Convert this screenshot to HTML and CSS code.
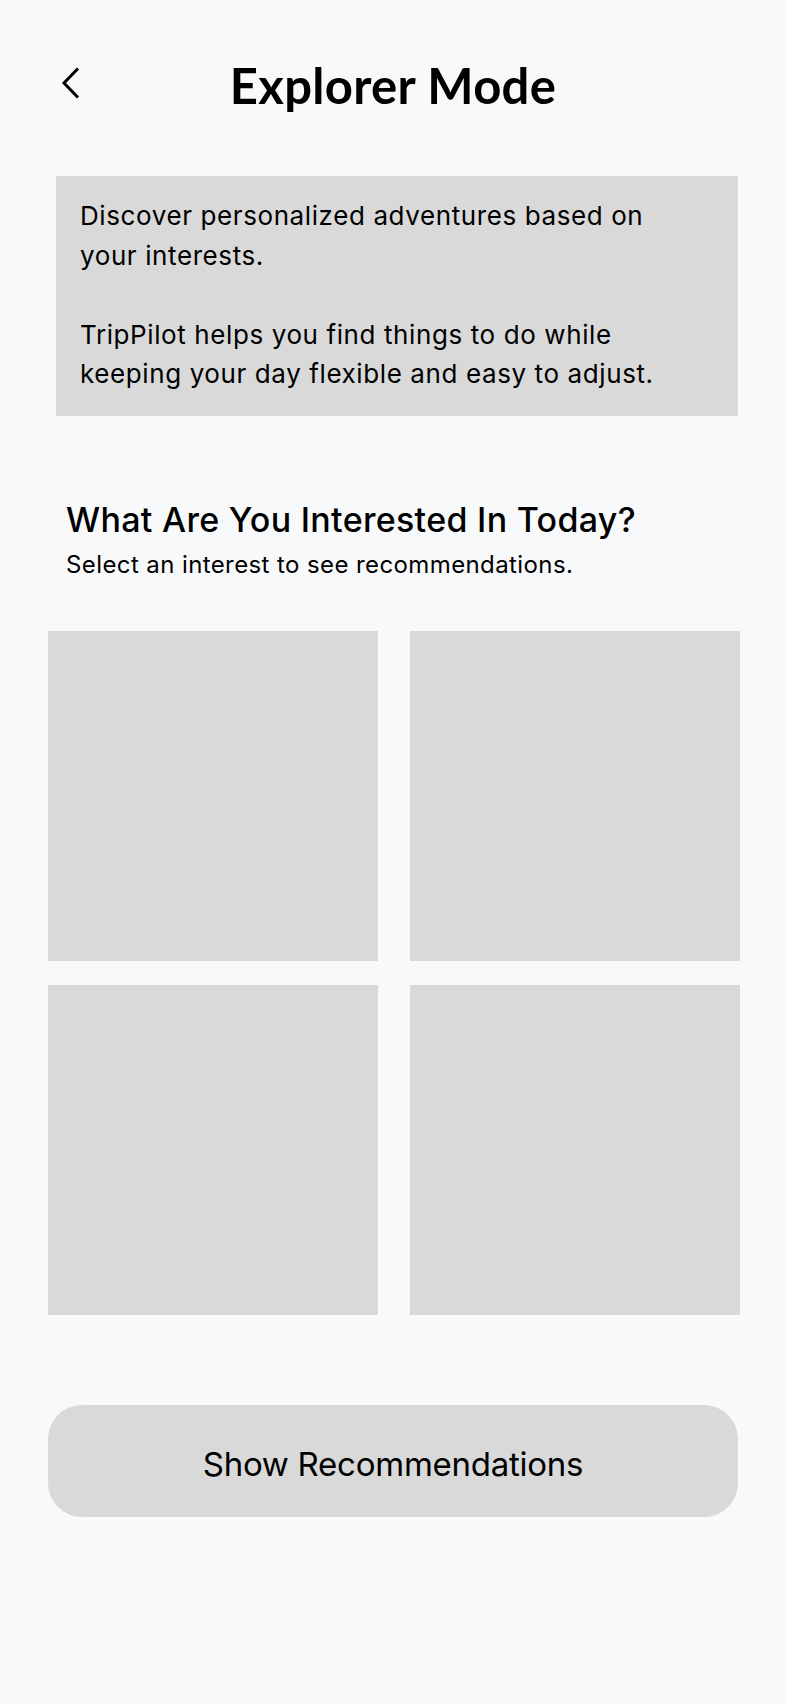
FILE: index.html
```html
<!DOCTYPE html>
<html lang="en">
<head>
<meta charset="utf-8">
<title>Explorer Mode</title>
<link rel="stylesheet" href="styles.css">
</head>
<body>
<div class="screen">
  <header class="topbar">
    <button class="back" aria-label="Back">
      <svg width="24" height="32" viewBox="0 0 24 32" aria-hidden="true"><path d="M20 1.5 L6 16 L20 30.5" fill="none" stroke="#000" stroke-width="3" stroke-linecap="butt" stroke-linejoin="miter"/></svg>
    </button>
    <h1 class="title">Explorer Mode</h1>
    <span class="spacer"></span>
  </header>

  <section class="intro">
    <p>Discover personalized adventures based on your interests.</p>
    <p>TripPilot helps you find things to do while keeping your day flexible and easy to adjust.</p>
  </section>

  <section class="interests">
    <h2 class="interests-title">What Are You Interested In Today?</h2>
    <p class="interests-sub">Select an interest to see recommendations.</p>
  </section>

  <div class="tiles">
    <div class="tile"></div>
    <div class="tile"></div>
    <div class="tile"></div>
    <div class="tile"></div>
  </div>

  <div class="actions">
    <button class="cta">Show Recommendations</button>
  </div>
</div>
</body>
</html>
```

FILE: styles.css
```css
* { box-sizing: border-box; }
html, body { margin: 0; padding: 0; }
body {
  background: #f8f9fb;
  font-family: Inter, "Noto Sans", sans-serif;
  color: #000;
  width: 786px;
  min-height: 1704px;
}
.screen { display: flex; flex-direction: column; }

.topbar {
  display: grid;
  grid-template-columns: 1fr auto 1fr;
  align-items: center;
  padding: 56px 0 0 0;
}
.back {
  justify-self: start;
  margin-left: 58px;
  margin-top: -5px;
  padding: 0;
  border: 0;
  background: none;
  width: 24px;
  height: 32px;
  display: flex;
  align-items: center;
  justify-content: center;
}
.title {
  margin: 0;
  font-family: Lato, Inter, sans-serif;
  font-weight: 700;
  font-size: 49px;
  line-height: 58px;
  letter-spacing: 0.3px;
}

.intro {
  margin: 62px 48px 0 56px;
  background: #d9d9d9;
  padding: 20px 58px 22px 24px;
}
.intro p {
  margin: 0;
  font-size: 26px;
  line-height: 39.5px;
  letter-spacing: 0.6px;
}
.intro p + p { margin-top: 39.5px; }

.interests { margin: 83px 0 0 66px; }
.interests-title {
  margin: 0;
  font-size: 34px;
  line-height: 41px;
  font-weight: 500;
  letter-spacing: 0.3px;
}
.interests-sub {
  margin: 10px 0 0;
  font-size: 24px;
  line-height: 29px;
  letter-spacing: 0.4px;
}

.tiles {
  margin: 52px 46px 0 48px;
  display: grid;
  grid-template-columns: 330px 330px;
  grid-auto-rows: 330px;
  column-gap: 32px;
  row-gap: 24px;
}
.tile { background: #d9d9d9; }

.actions { margin: 90px 48px 0 48px; }
.cta {
  width: 690px;
  height: 112px;
  border: 0;
  border-radius: 34px;
  background: #d9d9d9;
  font-family: Inter, sans-serif;
  font-size: 33px;
  color: #000;
  letter-spacing: -0.25px;
  padding: 6px 0 0;
}
```
